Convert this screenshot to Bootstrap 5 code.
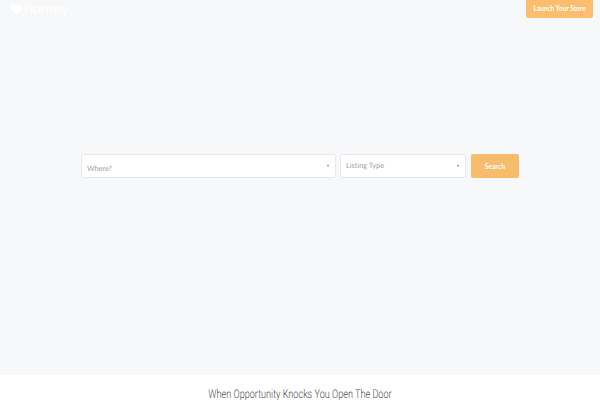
<!DOCTYPE html>
<html lang="en">
<head>
    <meta charset="UTF-8">
    <meta name="viewport" content="width=device-width, initial-scale=1.0">
    <title>Homey</title>
    <link rel="stylesheet" href="https://cdn.jsdelivr.net/npm/bootstrap@5.3.0/dist/css/bootstrap.min.css">
    <style>
        html, body {
            overflow: hidden;
        }
        body {
            font-family: "Lato", "Liberation Sans", sans-serif;
            background: #fff;
            text-rendering: geometricPrecision;
        }
        .hero-area {
            height: 375px;
            background: #f7f8fa;
        }
        .top-bar {
            height: 18px;
            padding: 0 7px 0 10px;
        }
        .logo-link {
            color: #fff;
            font-size: 15px;
            line-height: 18px;
            text-decoration: none;
            gap: 1px;
        }
        .logo-link svg {
            display: block;
        }
        .store-btn {
            width: 67px;
            height: 18px;
            padding: 0;
            border: 0;
            border-radius: 0 0 2px 2px;
            background: #fcbe6e;
            color: #fff;
            font-size: 6.500px;
            font-weight: 700;
            line-height: 18px;
        }
        .search-row {
            width: 438px;
            height: 24px;
            margin: 136px auto 0;
        }
        .search-box {
            height: 24px;
            padding: 0 6px 0 5px;
            background: #fff;
            border: 1px solid #e6e8eb;
            border-radius: 2px;
            color: #a0a0a0;
            font-size: 7.300px;
        }
        .where-box {
            width: 255px;
            margin-right: 4px;
            padding-top: 6px;
        }
        .type-box {
            width: 126px;
            margin-right: 5px;
        }
        .caret-mark {
            width: 0;
            height: 0;
            border-left: 1.500px solid transparent;
            border-right: 1.500px solid transparent;
            border-top: 2px solid #777;
        }
        .where-box .caret-mark {
            margin-top: -6px;
        }
        .find-btn {
            width: 48px;
            height: 24px;
            padding: 0;
            border: 0;
            border-radius: 2px;
            background: #f8bd6c;
            color: #fff;
            font-size: 6.800px;
            font-weight: 700;
        }
        .tag-line {
            margin: 0;
            padding-top: 12px;
            color: #4a4a4a;
            font-family: "Roboto", "Liberation Sans", sans-serif;
            font-size: 12px;
            font-weight: 300;
            line-height: 15px;
            transform: scaleX(0.76);
        }
    </style>
</head>
<body>

<div class="hero-area">
    <nav class="top-bar d-flex justify-content-between align-items-start">
        <a href="#" class="logo-link d-flex align-items-center">
            <svg width="13" height="11" viewBox="0 0 24 21" fill="#fff"><path d="M12 21 2 10.500C-1 7 0 1 6 0c3 0 5 2 6 4 1-2 3-4 6-4 6 1 7 7 4 10.500z"/></svg>
            <span>homey</span>
        </a>
        <button type="button" class="store-btn">Launch Your Store</button>
    </nav>
    <div class="search-row d-flex">
        <div class="search-box where-box d-flex justify-content-between align-items-center">
            <span>Where?</span>
            <span class="caret-mark"></span>
        </div>
        <div class="search-box type-box d-flex justify-content-between align-items-center">
            <span>Listing Type</span>
            <span class="caret-mark"></span>
        </div>
        <button type="button" class="find-btn">Search</button>
    </div>
</div>
<h2 class="tag-line text-center">When Opportunity Knocks You Open The Door</h2>

</body>
</html>
